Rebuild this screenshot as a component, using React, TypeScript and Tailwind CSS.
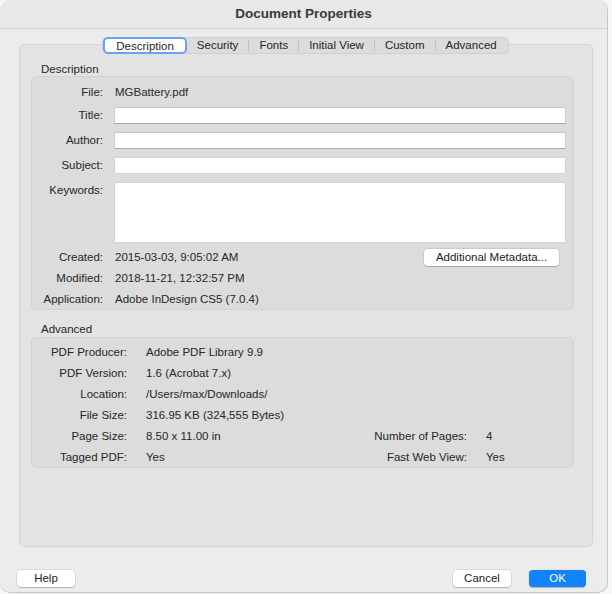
import React from "react";

const font = { fontFamily: '"Liberation Sans", Arial, sans-serif' };

const tabs = ["Description", "Security", "Fonts", "Initial View", "Custom", "Advanced"];

const Field = ({ label, strong, tall }: { label: string; strong?: boolean; tall?: boolean }) => (
  <div className="flex gap-[10px]">
    <div className={`w-[72px] text-right pr-[1px] ${tall ? "pt-[1px] leading-[14px]" : "leading-[17px]"}`}>{label}</div>
    <div
      className={`w-[452px] bg-white border border-[#d2d2d2] ${strong ? "border-b-[#a9a9a9] border-t-[#c4c4c4]" : ""} ${tall ? "h-[61px]" : "h-[17px]"}`}
    />
  </div>
);

const InfoRow = ({ label, value, right }: { label: string; value: string; right?: React.ReactNode }) => (
  <div className="flex items-center h-[21px] leading-[21px]">
    <div className="w-[95px] text-right">{label}</div>
    <div className="ml-[19px] w-[221px]">{value}</div>
    {right}
  </div>
);

const Btn = ({ children, w, primary }: { children: React.ReactNode; w: string; primary?: boolean }) => (
  <button
    className={`${w} h-[17px] rounded-[4px] text-[11.5px] leading-[17px] ${
      primary
        ? "bg-[#1283fb] text-white shadow-[0_0.5px_1px_rgba(0,0,0,0.25)]"
        : "bg-white text-[#222] shadow-[0_0_0_0.5px_rgba(0,0,0,0.15),0_1px_1px_rgba(0,0,0,0.18)]"
    }`}
  >
    {children}
  </button>
);

export default function App() {
  return (
    <div className="w-[612px] h-[594px] bg-[#f6f6f6]" style={font}>
      <div className="w-[608px] h-[593px] bg-[#ececec] rounded-[10px] border-r border-b border-[#c6c6c6] flex flex-col text-[11.5px] text-[#262626] overflow-hidden">
        {/* title bar */}
        <div className="h-[29px] bg-[#e8e8e8] border-b border-[#d0d0d0] text-center font-bold text-[13.5px] leading-[28px] text-[#3a3a3a]">
          Document Properties
        </div>

        {/* tabs */}
        <div className="mt-[8px] flex justify-center pl-[4px] relative z-10">
          <div className="flex items-center h-[17px] rounded-[5px] bg-[#dcdcdc] border border-[#d0d0d0] pr-[1px]">
            {tabs.map((t, i) => (
              <div key={t} className="flex items-center">
                {i > 1 && <div className="w-px h-[11px] bg-[#c3c3c3]" />}
                {i === 0 ? (
                  <div className="h-[17px] px-[11px] rounded-[5px] bg-white border-[2.5px] border-[#6aa3f3] leading-[12px] flex items-center text-[#1f1f1f]">
                    {t}
                  </div>
                ) : (
                  <div className="px-[10px] leading-[15px]">{t}</div>
                )}
              </div>
            ))}
          </div>
        </div>

        {/* tab panel */}
        <div className="mx-[19px] mr-[14px] -mt-[10px] h-[503px] bg-[#e3e3e3] border border-[#d4d4d4] rounded-[5px] pt-[17px]">
          <div className="pl-[21px] h-[14px] leading-[14px]">Description</div>
          <div className="ml-[11px] mr-[18px] h-[234px] bg-[#dcdcdc] border border-[#d2d2d2] rounded-[5px] pt-[7px] flex flex-col">
            <div className="flex gap-[12px] h-[16px] leading-[16px]">
              <div className="w-[71px] text-right">File:</div>
              <div className="text-[#2a2a2a]">MGBattery.pdf</div>
            </div>
            <div className="mt-[7px] flex flex-col gap-[8px]">
              <Field label="Title:" strong />
              <Field label="Author:" strong />
              <Field label="Subject:" />
              <Field label="Keywords:" tall />
            </div>
            <div className="mt-[4px] flex flex-col">
              <div className="flex items-center h-[21px]">
                <div className="w-[71px] text-right">Created:</div>
                <div className="ml-[12px] flex-1">2015-03-03, 9:05:02 AM</div>
                <div className="mr-[14px]">
                  <Btn w="w-[135px]">Additional Metadata...</Btn>
                </div>
              </div>
              <div className="flex items-center h-[21px]">
                <div className="w-[71px] text-right">Modified:</div>
                <div className="ml-[12px]">2018-11-21, 12:32:57 PM</div>
              </div>
              <div className="flex items-center h-[21px]">
                <div className="w-[71px] text-right">Application:</div>
                <div className="ml-[12px]">Adobe InDesign CS5 (7.0.4)</div>
              </div>
            </div>
          </div>

          <div className="pl-[21px] mt-[12px] h-[14px] leading-[14px]">Advanced</div>
          <div className="ml-[11px] mr-[18px] mt-[1px] h-[131px] bg-[#dcdcdc] border border-[#d2d2d2] rounded-[5px] pt-[4px]">
            <InfoRow label="PDF Producer:" value="Adobe PDF Library 9.9" />
            <InfoRow label="PDF Version:" value="1.6 (Acrobat 7.x)" />
            <InfoRow label="Location:" value="/Users/max/Downloads/" />
            <InfoRow label="File Size:" value="316.95 KB (324,555 Bytes)" />
            <InfoRow
              label="Page Size:"
              value="8.50 x 11.00 in"
              right={
                <>
                  <div className="w-[100px] text-right">Number of Pages:</div>
                  <div className="ml-[19px]">4</div>
                </>
              }
            />
            <InfoRow
              label="Tagged PDF:"
              value="Yes"
              right={
                <>
                  <div className="w-[100px] text-right">Fast Web View:</div>
                  <div className="ml-[19px]">Yes</div>
                </>
              }
            />
          </div>
        </div>

        {/* footer */}
        <div className="mt-[23px] flex items-center px-[17px] pr-[21px]">
          <Btn w="w-[58px]">Help</Btn>
          <div className="flex-1" />
          <Btn w="w-[58px]">Cancel</Btn>
          <div className="w-[18px]" />
          <Btn w="w-[57px]" primary>
            OK
          </Btn>
        </div>
      </div>
    </div>
  );
}
